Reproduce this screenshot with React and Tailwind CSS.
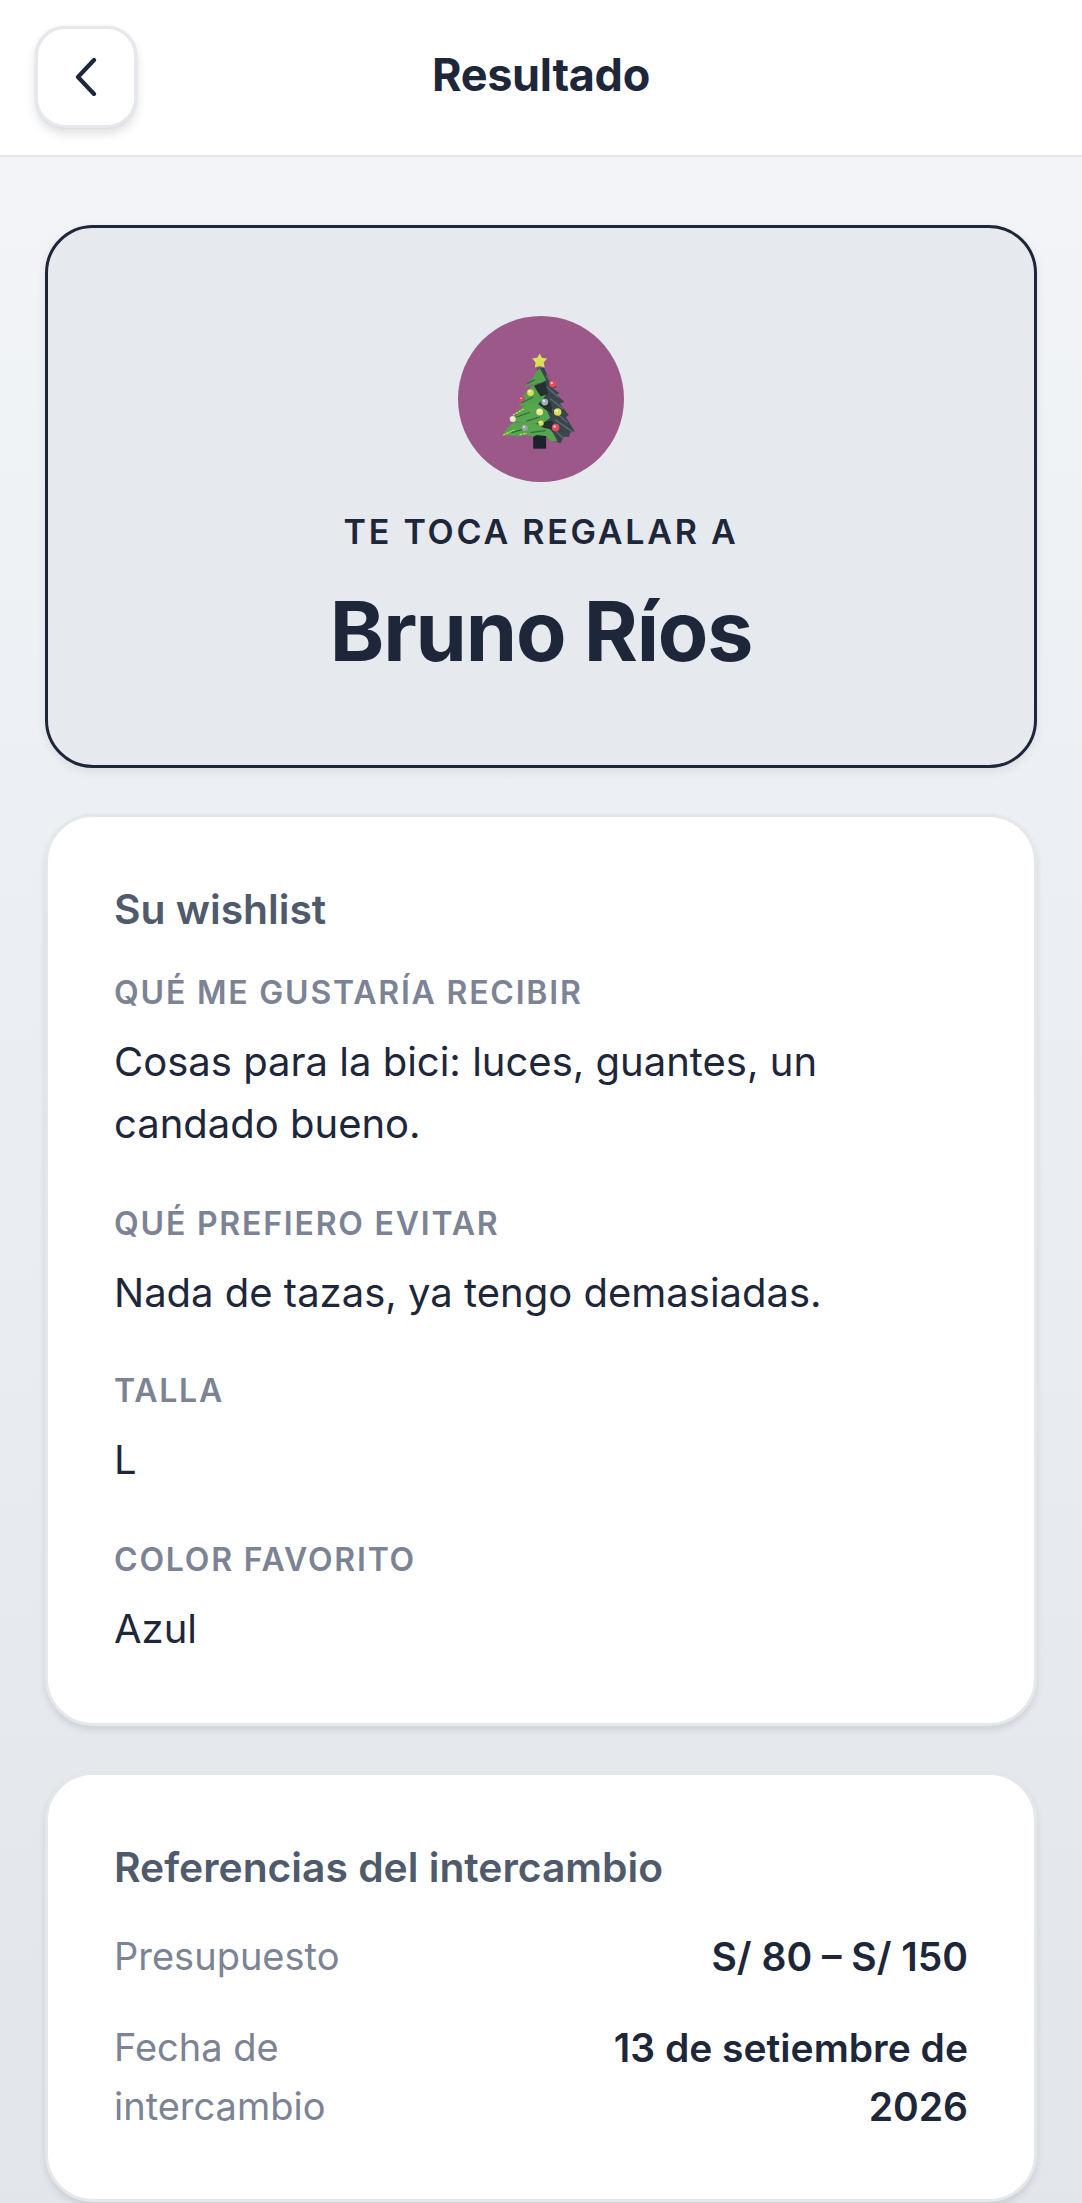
const Ball = ({ x, y, r, c }) => (
  <g>
    <circle cx={x} cy={y} r={r} fill={c} />
    <circle cx={x - r * 0.25} cy={y - r * 0.3} r={r * 0.35} fill="#ffffff" fillOpacity="0.7" />
  </g>
);

const Tree = () => (
  <svg viewBox="243 147 240 300" className="w-[82px] h-[102px]">
    <rect x="340" y="400" width="38" height="43" fill="#1b222c" />
    <path d="M352 205 L372 205 L386 238 L410 262 L398 266 L418 280 L408 284 L432 306 L418 310 L445 345 L436 350 L462 392 L448 396 L446 408 L430 408 L420 428 L400 420 L392 410 L378 406 L350 405 Z" fill="#39454a" />
    <path d="M378 228 L398 258 M376 258 L414 292 M390 296 L428 326 M396 328 L440 366 M404 358 L456 394 M392 378 L430 414" stroke="#5c6871" strokeWidth="4.5" fill="none" />
    <path d="M358 204 L368 222 L378 242 L362 250 L340 254 L314 262 L326 248 L332 244 L342 230 Z" fill="#52a24c" />
    <path d="M340 256 L362 258 L380 280 L368 300 L352 312 L330 316 L296 318 L310 306 L318 296 L310 288 L326 270 Z" fill="#52a24c" />
    <path d="M318 314 L354 308 L380 330 L390 352 L372 366 L340 370 L308 366 L276 362 L284 350 L296 342 L284 340 L304 326 Z" fill="#55a64e" />
    <path d="M282 366 L340 368 L384 380 L398 396 L412 422 L392 420 L378 406 L352 402 L340 408 L318 402 L296 408 L276 404 L250 405 L258 392 L268 378 Z" fill="#55a64e" />
    <path d="M342 258 L376 248 L384 282 L362 290 Z M354 312 L392 306 L396 340 L376 328 Z M352 370 L396 360 L406 388 L372 382 Z" fill="#24312f" />
    <path d="M322 252 L346 240 M306 308 L340 292 M286 352 L330 336 M320 362 L360 350 M276 396 L318 384 M332 396 L376 390" stroke="#2f6b3d" strokeWidth="3.5" fill="none" />
    <path d="M252 403 L285 388 M280 345 L315 325 M300 402 L322 398" stroke="#d2dc4e" strokeWidth="3.5" strokeDasharray="7 3" fill="none" />
    <path d="M359 163 L366 176 L381 178 L371 190 L374 204 L359 200 L345 204 L347 190 L337 178 L352 176 Z" fill="#dbe05a" />
    <Ball x={397} y={253} r={10} c="#e8475c" />
    <Ball x={332} y={278} r={10} c="#d8dc50" />
    <Ball x={306} y={297} r={7} c="#e8475c" />
    <Ball x={374} y={306} r={10} c="#a8abb6" />
    <Ball x={359} y={335} r={10} c="#ecea8c" />
    <Ball x={412} y={335} r={11} c="#d8dc50" />
    <Ball x={280} y={356} r={9} c="#e9e9c4" />
    <Ball x={363} y={368} r={8} c="#d8dc50" />
    <Ball x={315} y={382} r={9} c="#9aa1a9" />
    <Ball x={406} y={381} r={11} c="#e8475c" />
  </svg>
);

const Label = ({ children }) => (
  <div className="text-[32px] leading-[44px] font-semibold tracking-[1.8px] text-[#7b8394]">{children}</div>
);
const Body = ({ children }) => (
  <div className="text-[40px] leading-[62px] text-[#1e273a] mt-[16px]">{children}</div>
);

export default function App() {
  return (
    <div className="h-[2203px] overflow-hidden bg-gradient-to-b from-[#f3f5f8] to-[#e2e6eb] text-[#1e273a] [font-family:Inter,sans-serif]">
      <header className="h-[157px] bg-white border-b-2 border-[#e5e7eb] px-[35px] pt-[26px] relative">
        <button className="w-[102px] h-[102px] rounded-[30px] bg-white border-[3px] border-[#e6e8ee] shadow-[0_6px_10px_rgba(30,39,58,0.14),0_0_2px_rgba(30,39,58,0.12)] flex items-center justify-center">
          <svg width="24" height="38" viewBox="0 0 24 38" fill="none" stroke="#1e273a" strokeWidth="4.2" strokeLinecap="round" strokeLinejoin="round">
            <path d="M20 2 L4 19 L20 36" />
          </svg>
        </button>
        <h1 className="absolute left-0 right-0 top-[50px] text-center text-[45px] leading-[50px] font-bold tracking-[-0.3px]">Resultado</h1>
      </header>
      <main className="px-[45px] pt-[68px] flex flex-col gap-[46px]">
        <section className="h-[543px] rounded-[48px] border-[3px] border-[#1e273a] bg-[#e6e9ee] shadow-[0_4px_10px_rgba(31,41,55,0.08)] flex flex-col items-center pt-[88px]">
          <div className="w-[166px] h-[166px] rounded-full bg-[#9b5889] flex items-center justify-center">
            <Tree />
          </div>
          <div className="mt-[28px] text-[34px] leading-[44px] font-semibold tracking-[2.75px]">TE TOCA REGALAR A</div>
          <div className="mt-[27px] text-[82.5px] leading-[100px] font-bold tracking-[-1.2px]">Bruno Ríos</div>
        </section>

        <section className="h-[912px] rounded-[48px] bg-white border-[3px] border-[#e5e7eb] shadow-[0_4px_6px_rgba(31,41,55,0.12)] px-[66px] pt-[68px]">
          <h2 className="text-[40.8px] leading-[48px] font-semibold text-[#4f5b6c] mb-[38px]">Su wishlist</h2>
          <Label>QUÉ ME GUSTARÍA RECIBIR</Label>
          <Body>Cosas para la bici: luces, guantes, un<br />candado bueno.</Body>
          <div className="mt-[47px]"><Label>QUÉ PREFIERO EVITAR</Label></div>
          <Body>Nada de tazas, ya tengo demasiadas.</Body>
          <div className="mt-[45px]"><Label>TALLA</Label></div>
          <Body>L</Body>
          <div className="mt-[47px]"><Label>COLOR FAVORITO</Label></div>
          <Body>Azul</Body>
        </section>

        <section className="h-[430px] shrink-0 rounded-[48px] bg-white border-[3px] border-[#e5e7eb] shadow-[0_4px_6px_rgba(31,41,55,0.12)] px-[66px] pt-[68px]">
          <h2 className="text-[40.8px] leading-[48px] font-semibold text-[#4f5b6c] mb-[36px]">Referencias del intercambio</h2>
          <div className="flex justify-between items-start">
            <div className="text-[38px] leading-[59px] text-[#7b8394]">Presupuesto</div>
            <div className="text-[39px] leading-[59px] font-semibold text-right">S/ 80 – S/ 150</div>
          </div>
          <div className="flex justify-between items-start mt-[32px]">
            <div className="text-[38px] leading-[59px] text-[#7b8394]">Fecha de<br />intercambio</div>
            <div className="text-[39px] leading-[59px] font-semibold text-right">13 de setiembre de<br />2026</div>
          </div>
        </section>
      </main>
    </div>
  );
}
